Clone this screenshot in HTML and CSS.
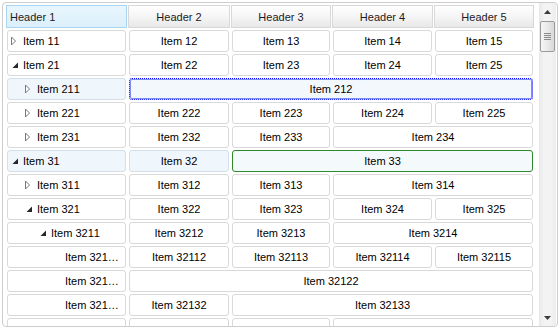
FILE: index.html
```html
<!DOCTYPE html>
<html lang="en">
<head>
    <meta charset="UTF-8"/>
    <title>Tree Grid</title>
    <link rel="stylesheet" href="styles.css">
</head>
<body>
<div class="treegrid">
    <div class="grid-wrap">
        <div class="grid">
            <!-- header -->
            <div class="head head-first">Header 1</div>
            <div class="head">Header 2</div>
            <div class="head">Header 3</div>
            <div class="head">Header 4</div>
            <div class="head">Header 5</div>

            <div class="cell tree lvl0"><span class="toggle closed"><svg width="7" height="10" viewBox="0 0 7 10"><polygon points="1.5,1 5.5,5 1.5,9" fill="#fff" stroke="#7a7a7a"/></svg></span><span class="label">Item 11</span></div>
            <div class="cell">Item 12</div>
            <div class="cell">Item 13</div>
            <div class="cell">Item 14</div>
            <div class="cell">Item 15</div>

            <div class="cell tree lvl0"><span class="toggle open"><svg width="7" height="7" viewBox="0 0 7 7"><polygon points="6,0.5 6,6 0.5,6" fill="#262626"/></svg></span><span class="label">Item 21</span></div>
            <div class="cell">Item 22</div>
            <div class="cell">Item 23</div>
            <div class="cell">Item 24</div>
            <div class="cell">Item 25</div>

            <div class="cell tree lvl1 hover"><span class="toggle closed"><svg width="7" height="10" viewBox="0 0 7 10"><polygon points="1.5,1 5.5,5 1.5,9" fill="#fff" stroke="#7a7a7a"/></svg></span><span class="label">Item 211</span></div>
            <div class="cell span4 focused">Item 212</div>

            <div class="cell tree lvl1"><span class="toggle closed"><svg width="7" height="10" viewBox="0 0 7 10"><polygon points="1.5,1 5.5,5 1.5,9" fill="#fff" stroke="#7a7a7a"/></svg></span><span class="label">Item 221</span></div>
            <div class="cell">Item 222</div>
            <div class="cell">Item 223</div>
            <div class="cell">Item 224</div>
            <div class="cell">Item 225</div>

            <div class="cell tree lvl1"><span class="toggle closed"><svg width="7" height="10" viewBox="0 0 7 10"><polygon points="1.5,1 5.5,5 1.5,9" fill="#fff" stroke="#7a7a7a"/></svg></span><span class="label">Item 231</span></div>
            <div class="cell">Item 232</div>
            <div class="cell">Item 233</div>
            <div class="cell span2">Item 234</div>

            <div class="cell tree lvl0 hover"><span class="toggle open"><svg width="7" height="7" viewBox="0 0 7 7"><polygon points="6,0.5 6,6 0.5,6" fill="#262626"/></svg></span><span class="label">Item 31</span></div>
            <div class="cell hover">Item 32</div>
            <div class="cell span3 selected">Item 33</div>

            <div class="cell tree lvl1"><span class="toggle closed"><svg width="7" height="10" viewBox="0 0 7 10"><polygon points="1.5,1 5.5,5 1.5,9" fill="#fff" stroke="#7a7a7a"/></svg></span><span class="label">Item 311</span></div>
            <div class="cell">Item 312</div>
            <div class="cell">Item 313</div>
            <div class="cell span2">Item 314</div>

            <div class="cell tree lvl1"><span class="toggle open"><svg width="7" height="7" viewBox="0 0 7 7"><polygon points="6,0.5 6,6 0.5,6" fill="#262626"/></svg></span><span class="label">Item 321</span></div>
            <div class="cell">Item 322</div>
            <div class="cell">Item 323</div>
            <div class="cell">Item 324</div>
            <div class="cell">Item 325</div>

            <div class="cell tree lvl2"><span class="toggle open"><svg width="7" height="7" viewBox="0 0 7 7"><polygon points="6,0.5 6,6 0.5,6" fill="#262626"/></svg></span><span class="label">Item 3211</span></div>
            <div class="cell">Item 3212</div>
            <div class="cell">Item 3213</div>
            <div class="cell span2">Item 3214</div>

            <div class="cell tree lvl3"><span class="toggle"></span><span class="label">Item 32111</span></div>
            <div class="cell">Item 32112</div>
            <div class="cell">Item 32113</div>
            <div class="cell">Item 32114</div>
            <div class="cell">Item 32115</div>

            <div class="cell tree lvl3"><span class="toggle"></span><span class="label">Item 32121</span></div>
            <div class="cell span4">Item 32122</div>

            <div class="cell tree lvl3"><span class="toggle"></span><span class="label">Item 32131</span></div>
            <div class="cell">Item 32132</div>
            <div class="cell span3">Item 32133</div>

            <!-- next row, scrolled out of view -->
            <div class="cell tree lvl3"></div>
            <div class="cell"></div>
            <div class="cell"></div>
            <div class="cell span2"></div>
        </div>
    </div>

    <div class="scrollbar">
        <div class="sb-btn"><svg width="7" height="4" viewBox="0 0 7 4"><polygon points="3.5,0 7,4 0,4" fill="#3c3c3c"/></svg></div>
        <div class="sb-thumb">
            <span class="grip"></span><span class="grip"></span><span class="grip"></span><span class="grip"></span>
        </div>
        <div class="sb-fill"></div>
        <div class="sb-btn"><svg width="7" height="4" viewBox="0 0 7 4"><polygon points="0,0 7,0 3.5,4" fill="#3c3c3c"/></svg></div>
    </div>
</div>
</body>
</html>
```

FILE: styles.css
```css
html, body {
    margin: 0;
    padding: 0;
    background: #fff;
}

body {
    font-family: "Liberation Sans", Arial, sans-serif;
    font-size: 11px;
    color: #000;
}

.treegrid {
    margin: 2px;
    height: 325px;
    box-sizing: border-box;
    border: 1px solid #cdcdcd;
    border-radius: 4px;
    display: flex;
    overflow: hidden;
}

.grid-wrap {
    flex: 1;
    padding: 2px 0 0 3px;
    overflow: hidden;
}

.grid {
    display: grid;
    grid-template-columns: 122px 103px 101px 102px 101px;
    grid-template-rows: 23px;
    grid-auto-rows: 22px;
    row-gap: 2px;
}

.head {
    margin-right: 1px;
    border: 1px solid #d8d8d8;
    background: linear-gradient(#ffffff, #f4f4f4 55%, #e8e8e8);
    display: flex;
    align-items: center;
    justify-content: center;
    color: #1e1a24;
}

.head-first {
    justify-content: flex-start;
    padding-left: 3px;
    border-color: #a9d7f1;
    background: linear-gradient(#e9f6fd, #dbeffa);
}

.cell {
    margin: 0 2px 0 1px;
    border: 1px solid #d9d9d9;
    border-radius: 3px;
    background: #fff;
    display: flex;
    align-items: center;
    justify-content: center;
    white-space: nowrap;
    overflow: hidden;
}

.span2 { grid-column: span 2; }
.span3 { grid-column: span 3; }
.span4 { grid-column: span 4; }

.tree {
    justify-content: flex-start;
    padding-right: 4px;
}

.lvl0 { padding-left: 2px; }
.lvl1 { padding-left: 16px; }
.lvl2 { padding-left: 30px; }
.lvl3 { padding-left: 44px; }

.toggle {
    flex: none;
    width: 13px;
    height: 12px;
    display: flex;
    align-items: center;
}

.toggle.open svg { margin-left: 2px; margin-top: 1px; }

.label {
    min-width: 0;
    overflow: hidden;
    text-overflow: ellipsis;
    font-kerning: none;
}

.lvl3 .label {
    max-width: 54.5px;
}

.hover {
    background: #eff6fc;
    border-color: #d3dfea;
}

.focused {
    background: #f3f8fd;
    border: 1px dotted #0000ff;
    box-shadow: inset 0 0 0 1px #7d8cf0;
}

.selected {
    background: #f4f9fc;
    border-color: #2c8a2c;
}

.scrollbar {
    flex: none;
    width: 17px;
    margin-right: 1px;
    background: linear-gradient(to right, #e8e8e8, #f3f3f3 30%, #f3f3f3 70%, #ececec);
    display: flex;
    flex-direction: column;
}

.sb-btn {
    height: 17px;
    display: flex;
    align-items: center;
    justify-content: center;
}

.sb-thumb {
    height: 31px;
    margin: 1px 1px 0;
    box-sizing: border-box;
    border: 1px solid #9b9b9b;
    border-radius: 2px;
    background: linear-gradient(to right, #f6f6f6, #e9e9e9 50%, #d8d8d8);
    display: flex;
    flex-direction: column;
    align-items: center;
    justify-content: center;
    gap: 1px;
}

.grip {
    width: 7px;
    height: 1px;
    background: #8a8a8a;
}

.sb-fill {
    flex: 1;
}
```
